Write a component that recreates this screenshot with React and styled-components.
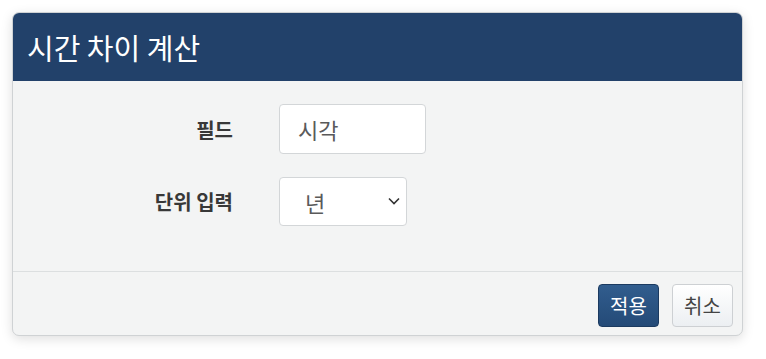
import React from "react";
import styled, { createGlobalStyle } from "styled-components";

const Global = createGlobalStyle`
  html, body { margin: 0; padding: 0; background: #ffffff; }
  body { font-family: "Noto Sans CJK KR", "Noto Sans", sans-serif; }
  * { box-sizing: border-box; }
`;

const Page = styled.div`
  padding: 12px 23px 23px 12px;
`;

const Card = styled.div`
  width: 731px;
  border: 1px solid #cfd2d4;
  border-radius: 7px;
  overflow: hidden;
  background: #f3f4f4;
  box-shadow: 0 3px 12px rgba(0, 0, 0, 0.13);
`;

const Header = styled.div`
  height: 69px;
  background: #22416a;
  display: flex;
  align-items: center;
  padding-left: 15px;
  margin: -1px -1px 0 -1px;
`;

const Title = styled.h1`
  margin: 0;
  font-size: 29px;
  font-weight: 400;
  color: #ffffff;
  letter-spacing: 0;
`;

const Body = styled.div`
  padding: 23px 0 45px 0;
  display: grid;
  grid-template-columns: 220px auto;
  column-gap: 46px;
  row-gap: 23px;
  align-items: center;
`;

const Label = styled.label`
  text-align: right;
  font-size: 20px;
  font-weight: 700;
  color: #383838;
`;

const Field = styled.div`
  display: flex;
`;

const TextInput = styled.input`
  width: ${(p) => p.$w}px;
  height: 50px;
  border: 1px solid #d3d6d8;
  border-radius: 4px;
  background: #ffffff;
  padding: 0 0 0 18px;
  font-family: inherit;
  font-size: 22px;
  color: #5a5a5a;
  outline: none;
`;

const SelectWrap = styled.div`
  position: relative;
  width: ${(p) => p.$w}px;
  height: 49px;
`;

const Select = styled.select`
  appearance: none;
  width: 100%;
  height: 100%;
  border: 1px solid #d3d6d8;
  border-radius: 4px;
  background: #ffffff;
  padding: 0 0 0 25px;
  font-family: inherit;
  font-size: 22px;
  color: #5a5a5a;
  outline: none;
`;

const Chevron = styled.svg`
  position: absolute;
  right: 6px;
  top: 19px;
  width: 14px;
  height: 10px;
  pointer-events: none;
`;

const Footer = styled.div`
  border-top: 1px solid #dcdfe0;
  padding: 12px 9px 8px 0;
  display: flex;
  justify-content: flex-end;
  gap: 13px;
`;

const Button = styled.button`
  height: 43px;
  width: 61px;
  padding: 0;
  border-radius: 4px;
  font-family: inherit;
  font-size: 20px;
  cursor: pointer;
  border: 1px solid ${(p) => (p.$primary ? "#1b3a60" : "#cdd0d3")};
  color: ${(p) => (p.$primary ? "#ffffff" : "#444444")};
  background: ${(p) =>
    p.$primary
      ? "linear-gradient(#315d8e, #244a77)"
      : "linear-gradient(#ffffff, #eceff2)"};
`;

export default function App() {
  return (
    <>
      <Global />
      <Page>
        <Card>
          <Header>
            <Title>시간 차이 계산</Title>
          </Header>
          <Body>
            <Label>필드</Label>
            <Field>
              <TextInput $w={147} defaultValue="시각" readOnly />
            </Field>
            <Label>단위 입력</Label>
            <Field>
              <SelectWrap $w={128}>
                <Select defaultValue="년">
                  <option>년</option>
                  <option>월</option>
                  <option>일</option>
                  <option>시</option>
                  <option>분</option>
                  <option>초</option>
                </Select>
                <Chevron viewBox="0 0 14 10">
                  <path d="M2 2.5 L7 7.5 L12 2.5" fill="none" stroke="#333" strokeWidth="1.6" />
                </Chevron>
              </SelectWrap>
            </Field>
          </Body>
          <Footer>
            <Button $primary>적용</Button>
            <Button>취소</Button>
          </Footer>
        </Card>
      </Page>
    </>
  );
}
